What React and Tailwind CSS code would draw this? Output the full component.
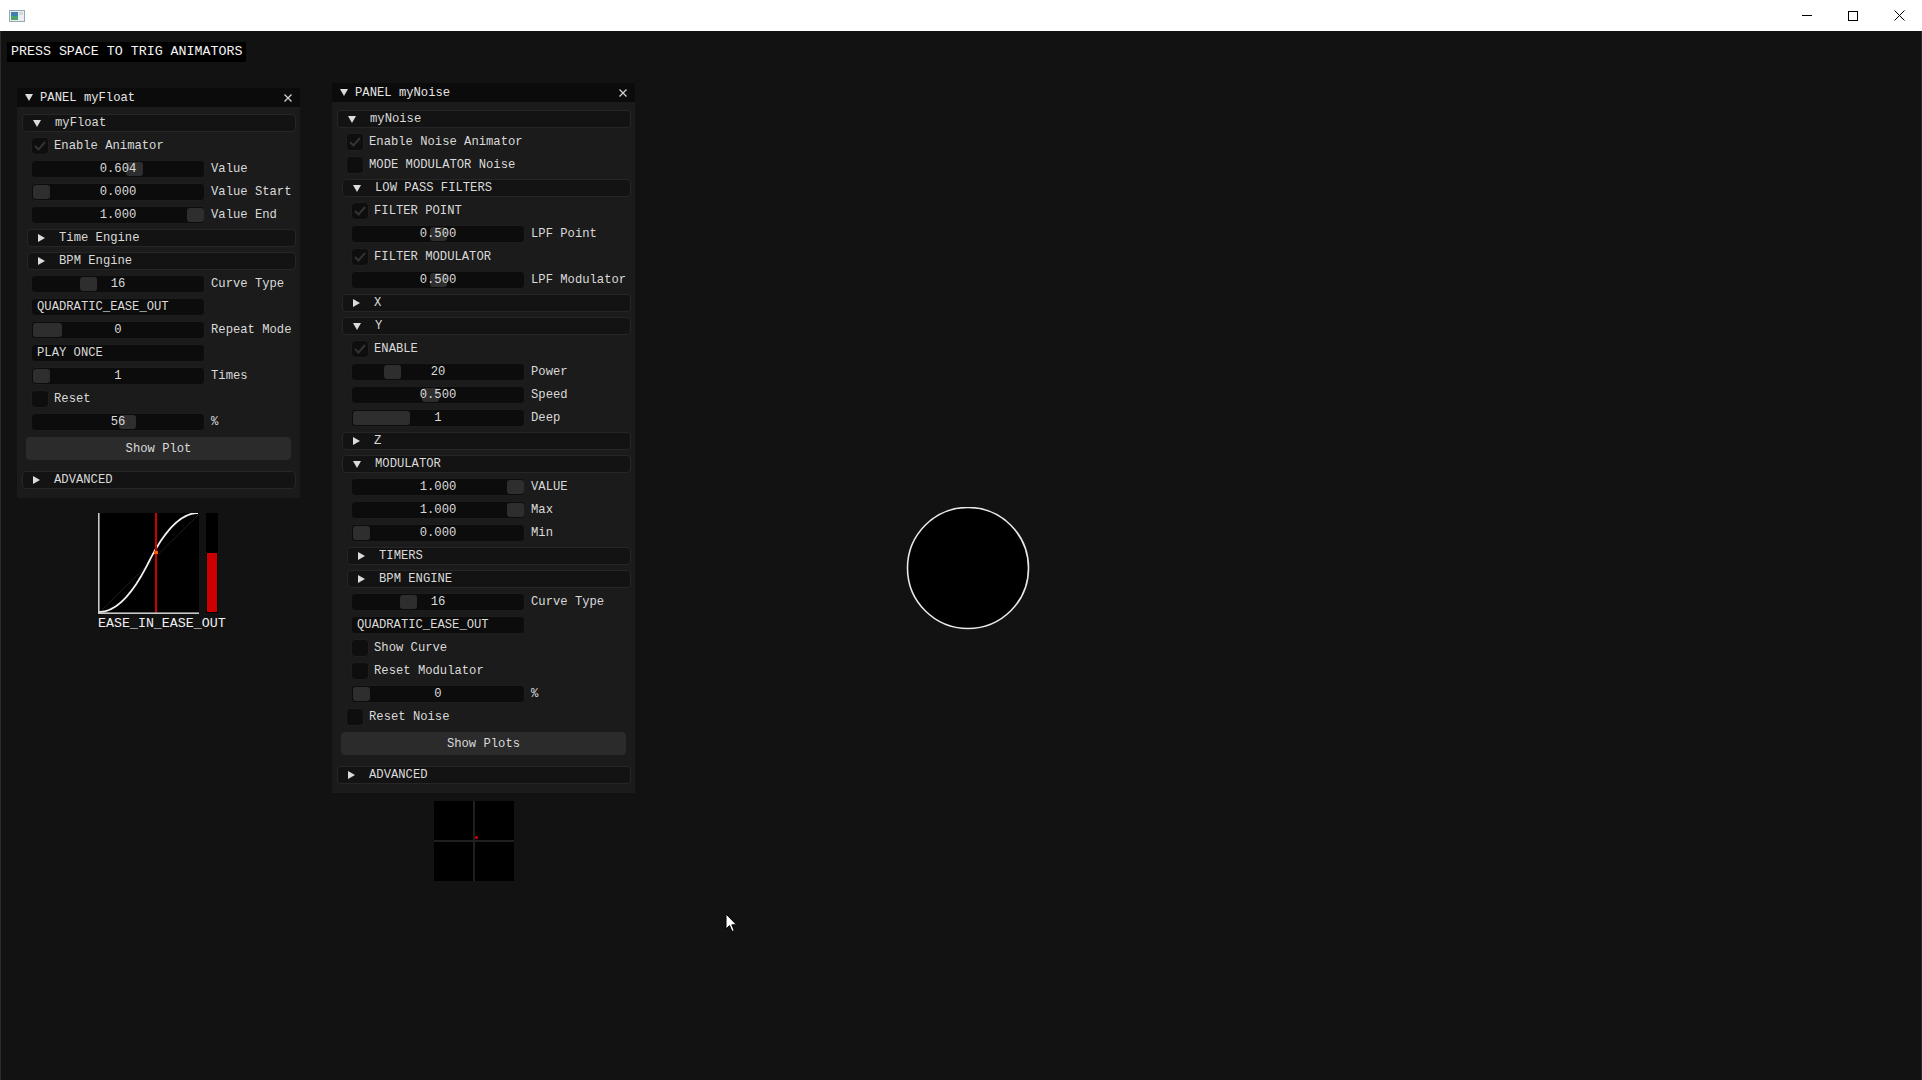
import React from "react";

const mono = "font-['Liberation_Mono','DejaVu_Sans_Mono',monospace]";

const Arrow = ({ open }) =>
  open ? (
    <svg width="8" height="7" viewBox="0 0 8 7" className="shrink-0">
      <polygon points="0,0 8,0 4,7" fill="#dcdcdc" />
    </svg>
  ) : (
    <svg width="7" height="8" viewBox="0 0 7 8" className="shrink-0">
      <polygon points="0,0 7,4 0,8" fill="#dcdcdc" />
    </svg>
  );

const Header = ({ title }) => (
  <div className="h-[19px] bg-[#0b0b0b] flex items-center pl-[8px] pr-[8px] text-[#e6e6e6]">
    <Arrow open />
    <span className="ml-[7px] flex-1">{title}</span>
    <svg width="8" height="8" viewBox="0 0 8 8">
      <path d="M0.5 0.5 L7.5 7.5 M7.5 0.5 L0.5 7.5" stroke="#d0d0d0" strokeWidth="1.3" />
    </svg>
  </div>
);

const Node = ({ label, open, className }) => (
  <div
    className={
      "h-[18px] mr-[4px] rounded-[4px] bg-[#131313] border border-[#262626] flex items-center pl-[10px] " +
      className
    }
  >
    <Arrow open={open} />
    <span className="ml-[14px]">{label}</span>
  </div>
);

const Check = ({ label, checked, className }) => (
  <div className={"h-[18px] flex items-center " + className}>
    <div className="w-[18px] h-[18px] rounded-[4px] bg-[#0e0e0e] border border-[#1f1f1f] flex items-center justify-center">
      {checked && (
        <svg width="12" height="10" viewBox="0 0 12 10">
          <polyline points="1,5 4.5,8.5 11,1" fill="none" stroke="#333333" strokeWidth="2" />
        </svg>
      )}
    </div>
    <span className="ml-[5px]">{label}</span>
  </div>
);

const Slider = ({ value, label, grab, grabW = 17, className }) => (
  <div className={"h-[18px] flex items-center " + className}>
    <div className="relative w-[174px] h-[18px] rounded-[4px] bg-[#0c0c0c] border border-[#1d1d1d] flex items-center justify-center">
      <div
        className="absolute top-[1px] h-[14px] rounded-[3px] bg-[#2e2e2e]"
        style={{ left: grab, width: grabW }}
      />
      <span className="relative">{value}</span>
    </div>
    <span className="ml-[6px]">{label}</span>
  </div>
);

const Combo = ({ text, className }) => (
  <div className={"h-[18px] " + className}>
    <div className="w-[174px] h-[18px] rounded-[4px] bg-[#0c0c0c] border border-[#1d1d1d] flex items-center pl-[5px]">
      {text}
    </div>
  </div>
);

const Button = ({ label }) => (
  <div className="h-[23px] mx-[9px] mt-[1px] mb-[6px] rounded-[4px] bg-[#2b2b2b] flex items-center justify-center">
    {label}
  </div>
);

const FloatPanel = () => (
  <div className="absolute left-[16px] top-[57px] w-[283px] bg-[#1b1b1b]">
    <Header title="PANEL myFloat" />
    <div className="flex flex-col gap-[5px] pt-[7px] pb-[9px]">
      <Node label="myFloat" open className="ml-[5px]" />
      <Check label="Enable Animator" checked className="ml-[14px]" />
      <Slider value="0.604" label="Value" grab={94} className="ml-[14px]" />
      <Slider value="0.000" label="Value Start" grab={1} className="ml-[14px]" />
      <Slider value="1.000" label="Value End" grab={155} className="ml-[14px]" />
      <Node label="Time Engine" className="ml-[10px]" />
      <Node label="BPM Engine" className="ml-[10px]" />
      <Slider value="16" label="Curve Type" grab={48} className="ml-[14px]" />
      <Combo text="QUADRATIC_EASE_OUT" className="ml-[14px]" />
      <Slider value="0" label="Repeat Mode" grab={1} grabW={29} className="ml-[14px]" />
      <Combo text="PLAY ONCE" className="ml-[14px]" />
      <Slider value="1" label="Times" grab={1} className="ml-[14px]" />
      <Check label="Reset" className="ml-[14px]" />
      <Slider value="56" label="%" grab={87} className="ml-[14px]" />
      <Button label="Show Plot" />
      <Node label="ADVANCED" className="ml-[5px]" />
    </div>
  </div>
);

const NoisePanel = () => (
  <div className="absolute left-[331px] top-[52px] w-[303px] bg-[#1b1b1b]">
    <Header title="PANEL myNoise" />
    <div className="flex flex-col gap-[5px] pt-[8px] pb-[9px]">
      <Node label="myNoise" open className="ml-[5px]" />
      <Check label="Enable Noise Animator" checked className="ml-[14px]" />
      <Check label="MODE MODULATOR Noise" className="ml-[14px]" />
      <Node label="LOW PASS FILTERS" open className="ml-[10px]" />
      <Check label="FILTER POINT" checked className="ml-[19px]" />
      <Slider value="0.500" label="LPF Point" grab={78} className="ml-[19px]" />
      <Check label="FILTER MODULATOR" checked className="ml-[19px]" />
      <Slider value="0.500" label="LPF Modulator" grab={78} className="ml-[19px]" />
      <Node label="X" className="ml-[10px]" />
      <Node label="Y" open className="ml-[10px]" />
      <Check label="ENABLE" checked className="ml-[19px]" />
      <Slider value="20" label="Power" grab={32} className="ml-[19px]" />
      <Slider value="0.500" label="Speed" grab={70} className="ml-[19px]" />
      <Slider value="1" label="Deep" grab={1} grabW={57} className="ml-[19px]" />
      <Node label="Z" className="ml-[10px]" />
      <Node label="MODULATOR" open className="ml-[10px]" />
      <Slider value="1.000" label="VALUE" grab={155} className="ml-[19px]" />
      <Slider value="1.000" label="Max" grab={155} className="ml-[19px]" />
      <Slider value="0.000" label="Min" grab={1} className="ml-[19px]" />
      <Node label="TIMERS" className="ml-[15px]" />
      <Node label="BPM ENGINE" className="ml-[15px]" />
      <Slider value="16" label="Curve Type" grab={48} className="ml-[19px]" />
      <Combo text="QUADRATIC_EASE_OUT" className="ml-[19px]" />
      <Check label="Show Curve" className="ml-[19px]" />
      <Check label="Reset Modulator" className="ml-[19px]" />
      <Slider value="0" label="%" grab={1} className="ml-[19px]" />
      <Check label="Reset Noise" className="ml-[14px]" />
      <Button label="Show Plots" />
      <Node label="ADVANCED" className="ml-[5px]" />
    </div>
  </div>
);

// ease in/out curve sampled into a polyline
const curvePts = Array.from({ length: 41 }, (_, i) => {
  const t = i / 40;
  const y = t < 0.5 ? 2 * t * t : 1 - Math.pow(-2 * t + 2, 2) / 2;
  return `${(t * 99).toFixed(2)},${(99 - y * 99).toFixed(2)}`;
}).join(" ");

const CurvePlot = () => (
  <div className="absolute left-[97px] top-[482px]">
    <svg width="122" height="101" viewBox="0 0 122 101">
      <rect x="0" y="0" width="101" height="101" fill="#000" />
      <line x1="1" y1="100" x2="101" y2="1" stroke="#1e1e1e" strokeWidth="1" />
      <polyline points={curvePts} transform="translate(1,0)" fill="none" stroke="#f2f2f2" strokeWidth="1.8" />
      <rect x="57" y="0" width="2" height="101" fill="#cc0000" />
      <rect x="56" y="38" width="4" height="3" fill="#ff5a00" />
      <rect x="0" y="0" width="1.6" height="101" fill="#c8c8c8" />
      <rect x="0" y="99.4" width="101" height="1.6" fill="#c8c8c8" />
      <rect x="108" y="0" width="12" height="100" fill="#000" />
      <rect x="109" y="40" width="10" height="59" fill="#cc0000" />
    </svg>
    <div className="text-[13.3px] leading-[16px] text-[#f0f0f0] mt-[2px]">EASE_IN_EASE_OUT</div>
  </div>
);

const NoisePlot = () => (
  <div className="absolute left-[433px] top-[770px] w-[80px] h-[80px] bg-[#000]">
    <div className="absolute left-[39px] top-0 w-[2px] h-[80px] bg-[#1f1f1f]" />
    <div className="absolute top-[39px] left-0 h-[2px] w-[80px] bg-[#1f1f1f]" />
    <div className="absolute left-[41px] top-[35px] w-[3px] h-[3px] rounded-full bg-[#e00000]" />
  </div>
);

export default function App() {
  return (
    <div className={"w-[1922px] h-[1080px] flex flex-col overflow-hidden " + mono}>
      <div className="h-[31px] bg-white flex items-center pl-[9px] shrink-0">
        <svg width="16" height="12" viewBox="0 0 16 12">
          <rect x="0.5" y="0.5" width="15" height="11" fill="#e8eef2" stroke="#9aa7b0" />
          <rect x="2" y="2" width="7" height="8" fill="#3d7fb0" />
          <rect x="2" y="6" width="7" height="4" fill="#4aa36a" />
          <rect x="10" y="2" width="4" height="3" fill="#cfd8de" />
        </svg>
        <div className="flex-1" />
        <div className="flex items-center">
          <div className="w-[46px] h-[31px] flex items-center justify-center">
            <div className="w-[10px] h-px bg-black" />
          </div>
          <div className="w-[46px] h-[31px] flex items-center justify-center">
            <div className="w-[10px] h-[10px] border border-black" />
          </div>
          <div className="w-[46px] h-[31px] flex items-center justify-center">
            <svg width="11" height="11" viewBox="0 0 11 11">
              <path d="M0.5 0.5 L10.5 10.5 M10.5 0.5 L0.5 10.5" stroke="#000" strokeWidth="1" />
            </svg>
          </div>
        </div>
      </div>

      <div className="relative flex-1 bg-[#121212] border-l border-r border-[#2a2a2a] text-[12.2px] leading-[16px] text-[#dadada]">
        <div className="absolute left-[6px] top-[11px] h-[20px] px-[4px] bg-black flex items-center text-[13.3px] text-[#f4f4f4]">
          PRESS SPACE TO TRIG ANIMATORS
        </div>

        <FloatPanel />
        <NoisePanel />
        <CurvePlot />
        <NoisePlot />

        <svg className="absolute left-[905px] top-[476px]" width="124" height="124" viewBox="0 0 124 124">
          <circle cx="62" cy="61" r="60.5" fill="#000" stroke="#e8e8e8" strokeWidth="1.6" />
        </svg>

        <svg className="absolute left-[724px] top-[882px]" width="13" height="20" viewBox="0 0 13 20">
          <path d="M1 1 L1 16 L4.5 12.5 L7 18.5 L9.3 17.5 L6.8 11.8 L11.5 11.8 Z" fill="#fff" stroke="#000" strokeWidth="1" />
        </svg>
      </div>
    </div>
  );
}
